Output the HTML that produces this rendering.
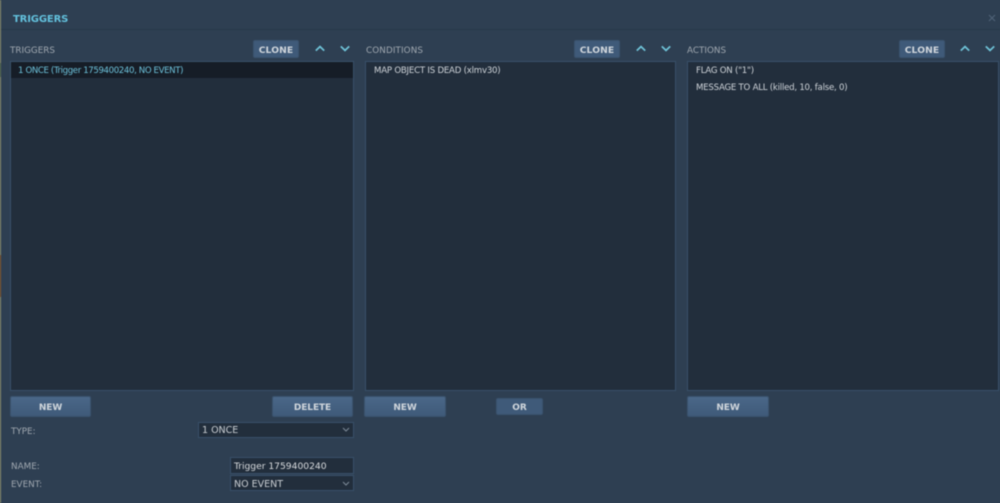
<!DOCTYPE html>
<html>
<head>
<meta charset="utf-8">
<style>
html,body{margin:0;padding:0;width:1000px;height:503px;overflow:hidden;background:#2e3f52;}
body{position:relative;font-family:"DejaVu Sans","Liberation Sans",sans-serif;}
#w{position:absolute;left:0;top:0;width:1000px;height:503px;background:#2e3f52;filter:blur(0.5px);}
.a{position:absolute;white-space:nowrap;}
.t{font-size:8.6px;line-height:12px;color:#d0d5da;}
.l{font-size:8.8px;line-height:12px;color:#a0a8b0;}
.p{position:absolute;top:61px;height:328px;background:#222e3c;border:1px solid #385069;}
.b{position:absolute;box-sizing:border-box;background:linear-gradient(#4a6788,#3f5a79);border:1px solid #3a526d;border-radius:2px;color:#d0d6dc;font-weight:bold;font-size:9px;letter-spacing:-.1px;text-align:center;}
.big{top:396px;width:82px;height:21px;line-height:22px;}
.c{top:40px;width:46px;height:18px;line-height:19px;background:#3f5a79;letter-spacing:.1px;font-size:9.2px;}
.f{position:absolute;box-sizing:border-box;background:#222e3c;border:1px solid #385069;color:#c8cdd2;font-size:9.5px;padding-left:3px;}
svg{position:absolute;overflow:visible;}
</style>
</head>
<body>
<div id="w">
<div class="a" style="left:0;top:0;width:1px;height:503px;background:#8f8f6d"></div>
<div class="a" style="left:0;top:63px;width:1px;height:14px;background:#5d7050"></div>
<div class="a" style="left:0;top:255px;width:1px;height:42px;background:#8a5a2a"></div>
<div class="a" style="left:1px;top:29px;width:999px;height:1px;background:#27384a"></div>

<div class="a" style="left:13px;top:13px;font-size:10px;line-height:14px;font-weight:bold;letter-spacing:-.15px;color:#62c0dc">TRIGGERS</div>
<svg style="left:988px;top:14px" width="8" height="8"><path d="M1 1L7 7M7 1L1 7" stroke="#4f6176" stroke-width="1.2"/></svg>

<div class="a l" style="left:10px;top:44.5px">TRIGGERS</div>
<div class="a l" style="left:366px;top:44.5px;letter-spacing:.1px">CONDITIONS</div>
<div class="a l" style="left:687px;top:44.5px">ACTIONS</div>

<div class="b c" style="left:253px">CLONE</div>
<div class="b c" style="left:574px">CLONE</div>
<div class="b c" style="left:899px">CLONE</div>

<svg style="left:315px;top:45px" width="10" height="7"><path d="M.8 5.6L5 1.6L9.2 5.6" fill="none" stroke="#6fc3d8" stroke-width="1.7"/></svg>
<svg style="left:340px;top:45px" width="10" height="7"><path d="M.8 1.4L5 5.4L9.2 1.4" fill="none" stroke="#6fc3d8" stroke-width="1.7"/></svg>
<svg style="left:636px;top:45px" width="10" height="7"><path d="M.8 5.6L5 1.6L9.2 5.6" fill="none" stroke="#6fc3d8" stroke-width="1.7"/></svg>
<svg style="left:661px;top:45px" width="10" height="7"><path d="M.8 1.4L5 5.4L9.2 1.4" fill="none" stroke="#6fc3d8" stroke-width="1.7"/></svg>
<svg style="left:960px;top:45px" width="10" height="7"><path d="M.8 5.6L5 1.6L9.2 5.6" fill="none" stroke="#6fc3d8" stroke-width="1.7"/></svg>
<svg style="left:985px;top:45px" width="10" height="7"><path d="M.8 1.4L5 5.4L9.2 1.4" fill="none" stroke="#6fc3d8" stroke-width="1.7"/></svg>

<div class="p" style="left:10px;width:342px"></div>
<div class="p" style="left:365px;width:309px"></div>
<div class="p" style="left:687px;width:310px"></div>

<div class="a" style="left:11px;top:62px;width:342px;height:16px;background:#161d27"></div>
<div class="a t" style="left:18px;top:65px;color:#6cc0d9;letter-spacing:-.38px">1 ONCE (Trigger 1759400240, NO EVENT)</div>
<div class="a t" style="left:374px;top:65px;letter-spacing:-.22px">MAP OBJECT IS DEAD (xlmv30)</div>
<div class="a t" style="left:696px;top:65px;letter-spacing:-.25px">FLAG ON ("1")</div>
<div class="a t" style="left:696px;top:82px;letter-spacing:-.24px">MESSAGE TO ALL (killed, 10, false, 0)</div>

<div class="b big" style="left:10px;width:81px">NEW</div>
<div class="b big" style="left:272px;width:81px">DELETE</div>
<div class="b big" style="left:364px">NEW</div>
<div class="b" style="left:496px;top:398px;width:47px;height:17px;line-height:18px;background:#3f5a79">OR</div>
<div class="b big" style="left:687px">NEW</div>

<div class="a l" style="left:11px;top:426px">TYPE:</div>
<div class="a l" style="left:11px;top:461px">NAME:</div>
<div class="a l" style="left:11px;top:479px">EVENT:</div>

<div class="f" style="left:198px;top:422px;width:156px;height:16px;line-height:16px">1 ONCE</div>
<div class="f" style="left:230px;top:457px;width:124px;height:17px;line-height:18px;color:#d8dbde;font-size:9.2px;letter-spacing:-.03px">Trigger 1759400240</div>
<div class="f" style="left:230px;top:475px;width:124px;height:16px;line-height:17px">NO EVENT</div>
<svg style="left:342px;top:427px" width="8" height="6"><path d="M1 1L4 4L7 1" fill="none" stroke="#7d8a98" stroke-width="1"/></svg>
<svg style="left:342px;top:481px" width="8" height="6"><path d="M1 1L4 4L7 1" fill="none" stroke="#7d8a98" stroke-width="1"/></svg>
</div>
</body>
</html>
